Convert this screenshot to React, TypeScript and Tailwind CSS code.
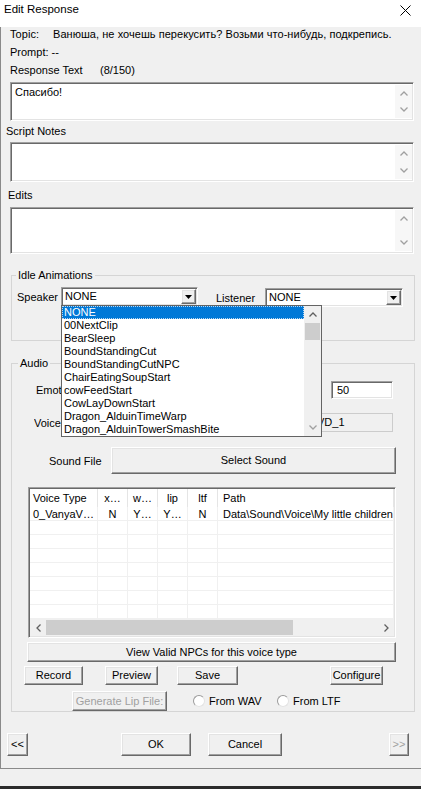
import React from 'react';
import clsx from 'clsx';

// classic 3D edges
const sunken =
  'border border-t-[#a0a0a0] border-l-[#a0a0a0] border-r-white border-b-white shadow-[inset_1px_1px_0_#696969,inset_-1px_-1px_0_#e3e3e3]';
const raised =
  'border border-t-white border-l-white border-r-[#696969] border-b-[#696969] shadow-[inset_-1px_-1px_0_#a0a0a0,inset_1px_1px_0_#e3e3e3] bg-[#f0f0f0]';

type Dir = 'up' | 'down' | 'left' | 'right';

function Chevron({ dir, color = '#a0a0a0' }: { dir: Dir; color?: string }) {
  const vertical = dir === 'up' || dir === 'down';
  const paths: Record<Dir, string> = {
    up: 'M0.5 4.5L4 1L7.5 4.5',
    down: 'M0.5 0.5L4 4L7.5 0.5',
    left: 'M4.5 0.5L1 4L4.5 7.5',
    right: 'M0.5 0.5L4 4L0.5 7.5',
  };
  return (
    <svg width={vertical ? 8 : 5} height={vertical ? 5 : 8} viewBox={vertical ? '0 0 8 5' : '0 0 5 8'}>
      <path d={paths[dir]} stroke={color} strokeWidth="1.3" fill="none" />
    </svg>
  );
}

function MemoBox({ className, text }: { className: string; text?: string }) {
  return (
    <div className={clsx('ml-[9px] flex w-[404px] bg-white', sunken, className)}>
      <div className="flex-1 px-[4px] pt-[2px] leading-[14px]">{text}</div>
      <div className="my-[2px] mr-[1px] flex w-[17px] flex-col items-center justify-between bg-[#f7f7f7] py-[6px]">
        <Chevron dir="up" />
        <Chevron dir="down" />
      </div>
    </div>
  );
}

function Combo({ value, className, children }: { value: string; className: string; children?: React.ReactNode }) {
  return (
    <div className={clsx('relative flex h-[19px] bg-white', sunken, className)}>
      <span className="flex-1 pl-[3px] pt-[1px] leading-[15px]">{value}</span>
      <div className={clsx('my-[1px] mr-[1px] flex w-[15px] items-center justify-center', raised)}>
        <svg width="7" height="4" viewBox="0 0 7 4">
          <polygon points="0,0 7,0 3.5,4" fill="#000" />
        </svg>
      </div>
      {children}
    </div>
  );
}

function Btn({ children, className, disabled }: { children: React.ReactNode; className: string; disabled?: boolean }) {
  return (
    <button
      type="button"
      className={clsx(
        'flex items-center justify-center leading-none',
        raised,
        disabled ? 'text-[#a0a0a0]' : 'text-black',
        className
      )}
    >
      {children}
    </button>
  );
}

function Radio({ label }: { label: string }) {
  return (
    <div className="flex items-center gap-[4px]">
      <span className="h-[12px] w-[12px] rounded-full border border-t-[#9a9a9a] border-l-[#9a9a9a] border-r-[#e3e3e3] border-b-[#e3e3e3] bg-white" />
      <span className="leading-[14px]">{label}</span>
    </div>
  );
}

const idles = [
  'NONE',
  '00NextClip',
  'BearSleep',
  'BoundStandingCut',
  'BoundStandingCutNPC',
  'ChairEatingSoupStart',
  'cowFeedStart',
  'CowLayDownStart',
  'Dragon_AlduinTimeWarp',
  'Dragon_AlduinTowerSmashBite',
];

const columns = [
  { title: 'Voice Type', w: 'w-[68px]', align: 'pl-[3px] text-left' },
  { title: 'x…', w: 'w-[30px]', align: 'text-center' },
  { title: 'w…', w: 'w-[30px]', align: 'text-center' },
  { title: 'lip', w: 'w-[30px]', align: 'text-center' },
  { title: 'ltf', w: 'w-[30px]', align: 'text-center' },
  { title: 'Path', w: 'flex-1', align: 'pl-[5px] text-left' },
];

const voiceRow = ['0_VanyaV…', 'N', 'Y…', 'Y…', 'N', 'Data\\Sound\\Voice\\My little children.'];

function IdleList() {
  return (
    <div className="absolute left-[-1px] top-full z-10 flex h-[132px] w-[261px] border border-[#646464] bg-white">
      <div className="flex-1 overflow-hidden">
        {idles.map((name, i) => (
          <div
            key={name}
            className={clsx(
              'h-[13px] whitespace-nowrap pl-[2px] leading-[13px]',
              i === 0 && 'bg-[#0078d7] text-white outline-1 outline-dotted -outline-offset-1 outline-[#b9d7f2]'
            )}
          >
            {name}
          </div>
        ))}
      </div>
      <div className="flex w-[17px] flex-col bg-[#f0f0f0]">
        <div className="flex h-[17px] items-center justify-center">
          <Chevron dir="up" color="#606060" />
        </div>
        <div className="flex-1">
          <div className="mx-[1px] h-[17px] bg-[#cdcdcd]" />
        </div>
        <div className="flex h-[17px] items-center justify-center">
          <Chevron dir="down" color="#a0a0a0" />
        </div>
      </div>
    </div>
  );
}

function VoiceList() {
  return (
    <div className={clsx('ml-[16px] flex h-[151px] w-[368px] flex-col bg-white', sunken)}>
      <div className="mx-[1px] mt-[1px] flex h-[18px]">
        {columns.map((c) => (
          <div key={c.title} className={clsx('h-full border-r border-[#e5e5e5] leading-[18px]', c.w, c.align)}>
            {c.title}
          </div>
        ))}
      </div>
      <div className="mx-[1px] flex-1 overflow-hidden">
        {Array.from({ length: 8 }).map((_, r) => (
          <div key={r} className="flex h-[14px] border-b border-[#f0f0f0]">
            {columns.map((c, i) => (
              <div
                key={c.title}
                className={clsx('h-full overflow-hidden whitespace-nowrap border-r border-[#f0f0f0] leading-[15px]', c.w, c.align)}
              >
                {r === 0 ? voiceRow[i] : ''}
              </div>
            ))}
          </div>
        ))}
      </div>
      <div className="mx-[1px] mb-[1px] flex h-[17px] bg-[#f0f0f0]">
        <div className="flex w-[16px] items-center justify-center">
          <Chevron dir="left" color="#606060" />
        </div>
        <div className="flex flex-1 items-center">
          <div className="h-[15px] w-[247px] bg-[#cdcdcd]" />
        </div>
        <div className="flex w-[16px] items-center justify-center">
          <Chevron dir="right" color="#606060" />
        </div>
      </div>
    </div>
  );
}

export default function App() {
  return (
    <div className="flex h-[789px] w-[421px] flex-col overflow-hidden bg-[#f0f0f0] font-['Liberation_Sans',Arial,sans-serif] text-[11px] text-black">
      {/* title bar */}
      <div className="flex h-[27px] shrink-0 items-start justify-between bg-white pl-[4px] pr-[10px] pt-[2px]">
        <span className="text-[11.5px] leading-[15px]">Edit Response</span>
        <svg width="11" height="11" viewBox="0 0 11 11" className="mt-[3px]">
          <path d="M0.5 0.5L10.5 10.5M10.5 0.5L0.5 10.5" stroke="#000" strokeWidth="1" />
        </svg>
      </div>

      <div className="flex h-[742px] shrink-0 flex-col border-b border-l border-[#8a8a8a]">
        <div className="flex h-[14px] pl-[9px] leading-[14px] tracking-[0.05px]">
          <span className="w-[43px]">Topic:</span>
          <span>Ванюша, не хочешь перекусить? Возьми что-нибудь, подкрепись.</span>
        </div>
        <div className="mt-[4px] h-[14px] pl-[9px] leading-[14px]">Prompt: --</div>
        <div className="mt-[4px] flex h-[14px] pl-[9px] leading-[14px]">
          <span className="w-[90px]">Response Text</span>
          <span>(8/150)</span>
        </div>
        <MemoBox className="mt-[5px] h-[39px]" text="Спасибо!" />
        <div className="mt-[3px] h-[14px] pl-[5px] leading-[14px]">Script Notes</div>
        <MemoBox className="mt-[4px] h-[40px]" />
        <div className="mt-[6px] h-[14px] pl-[7px] leading-[14px]">Edits</div>
        <MemoBox className="mt-[5px] h-[47px]" />

        {/* idle animations */}
        <fieldset className="ml-[10px] mt-[14px] w-[404px] border border-[#d5d5d5] pb-[34px]">
          <legend className="ml-[4px] px-[2px] leading-[14px]">Idle Animations</legend>
          <div className="mt-[5px] flex h-[19px] items-center">
            <span className="ml-[5px] w-[44px] leading-[14px]">Speaker</span>
            <Combo value="NONE" className="w-[137px]">
              <IdleList />
            </Combo>
            <span className="ml-[18px] w-[49px] pt-[2px] leading-[14px]">Listener</span>
            <Combo value="NONE" className="mt-[2px] w-[138px]" />
          </div>
        </fieldset>

        {/* audio */}
        <fieldset className="ml-[10px] mt-[15px] w-[404px] border border-[#d5d5d5]">
          <legend className="ml-[6px] px-[2px] leading-[14px]">Audio</legend>
          <div className="mt-[11px] flex h-[18px] items-center">
            <span className="ml-[24px] w-[25px] overflow-hidden whitespace-nowrap leading-[14px]">Emotion</span>
            <div className={clsx('ml-auto mr-[21px] h-[18px] w-[62px] bg-white pl-[5px] leading-[16px]', sunken)}>50</div>
          </div>
          <div className="mt-[14px] flex h-[19px] items-center">
            <span className="ml-[22px] w-[27px] overflow-hidden whitespace-nowrap leading-[14px]">Voice Type</span>
            <div className="ml-auto mr-[21px] h-[19px] w-[74px] overflow-hidden whitespace-nowrap border border-[#cccccc] leading-[17px]">
              <span className="ml-[-3px]">VD_1</span>
            </div>
          </div>
          <div className="mt-[15px] flex h-[27px] items-center">
            <span className="ml-[37px] w-[62px] leading-[14px]">Sound File</span>
            <Btn className="h-[27px] w-[285px]">Select Sound</Btn>
          </div>
          <div className="mt-[13px]">
            <VoiceList />
          </div>
          <Btn className="ml-[15px] mt-[4px] h-[20px] w-[369px]">View Valid NPCs for this voice type</Btn>
          <div className="mt-[4px] flex h-[19px]">
            <Btn className="ml-[12px] h-full w-[59px]">Record</Btn>
            <Btn className="ml-[22px] h-full w-[53px]">Preview</Btn>
            <Btn className="ml-[19px] h-full w-[61px]">Save</Btn>
            <Btn className="ml-[92px] h-full w-[53px]">Configure</Btn>
          </div>
          <div className="mt-[6px] flex h-[20px] items-center">
            <Btn className="ml-[60px] h-full w-[95px]" disabled>
              Generate Lip File:
            </Btn>
            <div className="ml-[26px] w-[84px]">
              <Radio label="From WAV" />
            </div>
            <Radio label="From LTF" />
          </div>
        </fieldset>

        <div className="mt-[21px] flex h-[23px]">
          <Btn className="ml-[6px] h-full w-[21px]">&lt;&lt;</Btn>
          <Btn className="ml-[93px] h-full w-[70px]">OK</Btn>
          <Btn className="ml-[17px] h-full w-[74px]">Cancel</Btn>
          <Btn className="ml-[107px] h-full w-[20px]" disabled>
            &gt;&gt;
          </Btn>
        </div>
      </div>

      {/* strip under the dialog frame */}
      <div className="h-[17px] shrink-0 bg-[#f0f0f0]" />
      <div className="h-[3px] shrink-0 bg-[#2b2b2b]" />
    </div>
  );
}
